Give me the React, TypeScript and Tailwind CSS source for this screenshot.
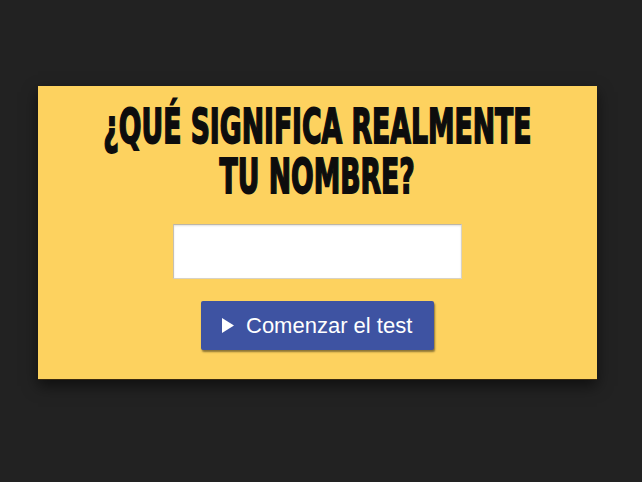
export default function App() {
  return (
    <div className="w-[642px] h-[482px] bg-[#222222] pt-[86px] pl-[38px]">
      <div className="w-[559px] h-[294px] bg-[#fdd25f] border-b border-[#3a2a10] shadow-[0_6px_14px_rgba(0,0,0,0.55)] flex flex-col items-center">
        {/* Heading */}
        <h1 className="mt-[23px] flex flex-col items-center gap-[16px] text-[#0d0d0d] font-bold text-[38px] leading-[34px] [-webkit-text-stroke:1.4px_#0d0d0d] font-['DejaVu_Sans_Condensed','DejaVu_Sans',sans-serif]">
          <span className="inline-block whitespace-nowrap scale-x-[0.78] scale-y-[1.28]">¿QUÉ SIGNIFICA REALMENTE</span>
          <span className="inline-block whitespace-nowrap scale-x-[0.78] scale-y-[1.28]">TU NOMBRE?</span>
        </h1>

        {/* Name input */}
        <input
          type="text"
          className="mt-[31px] w-[289px] h-[55px] bg-white border border-[#d8d2c4] border-t-[#bdb6a6] border-l-[#c7c0b0] shadow-[inset_0_1px_2px_rgba(0,0,0,0.12)] outline-none"
        />

        {/* Start button */}
        <button className="mt-[22px] w-[233px] h-[49px] bg-[#3e53a2] rounded-[2px] shadow-[1px_2px_2px_rgba(0,0,0,0.45)] flex items-center pl-[21px] gap-[12px] text-white text-[22px] font-['Liberation_Sans',Arial,sans-serif]">
          <svg width="12" height="15" viewBox="0 0 12 15">
            <path d="M0 0 L12 7.5 L0 15 Z" fill="#ffffff" />
          </svg>
          <span>Comenzar el test</span>
        </button>
      </div>
    </div>
  );
}
